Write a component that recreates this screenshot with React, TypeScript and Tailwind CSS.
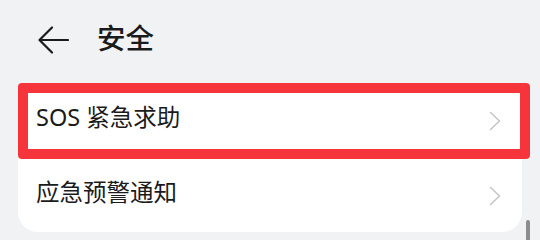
import * as React from 'react';

const font = { fontFamily: "'Noto Sans', 'Noto Sans CJK SC', sans-serif" };

function Chevron() {
  return (
    <svg width="12" height="20" viewBox="0 0 12 20" fill="none" className="shrink-0">
      <path d="M1.5 1.5 L10.5 10 L1.5 18.5" stroke="#c6c6c8" strokeWidth="1.6" strokeLinecap="round" strokeLinejoin="round" />
    </svg>
  );
}

function Row({ label, className }: { label: string; className?: string }) {
  return (
    <div className={`flex items-center justify-between pl-[18px] pr-[21px] ${className ?? ''}`}>
      <span className="text-[23.5px] text-[#1b1b1b] leading-none pb-[6px]">{label}</span>
      <Chevron />
    </div>
  );
}

export default function App() {
  return (
    <div className="relative w-[540px] h-[240px] overflow-hidden bg-[#f1f2f4]" style={font}>
      {/* Header */}
      <div className="flex items-center h-[83px] pb-[3px] pl-[38px] gap-[28px]">
        <svg width="31" height="28" viewBox="0 0 31 28" fill="none">
          <path d="M14 1.5 L1.5 14 L14 26.5 M1.5 14 H30" stroke="#1b1b1b" strokeWidth="2.2" strokeLinecap="round" strokeLinejoin="round" />
        </svg>
        <span className="text-[28.5px] font-medium text-[#1b1b1b] leading-none pb-[4px]">安全</span>
      </div>

      {/* Card */}
      <div className="mx-[18px] rounded-[20px] bg-white">
        <Row label="SOS 紧急求助" className="h-[76px]" />
        <Row label="应急预警通知" className="h-[73px]" />
      </div>

      {/* Highlight overlay */}
      <div className="absolute left-[18px] top-[83px] w-[512px] h-[76px] rounded-[4px] border-[10px] border-[#f5353b]" />

      {/* Scrollbar */}
      <div className="absolute left-[526px] top-[220px] w-[4px] h-[30px] rounded-full bg-[#8c8c8c]" />
    </div>
  );
}
